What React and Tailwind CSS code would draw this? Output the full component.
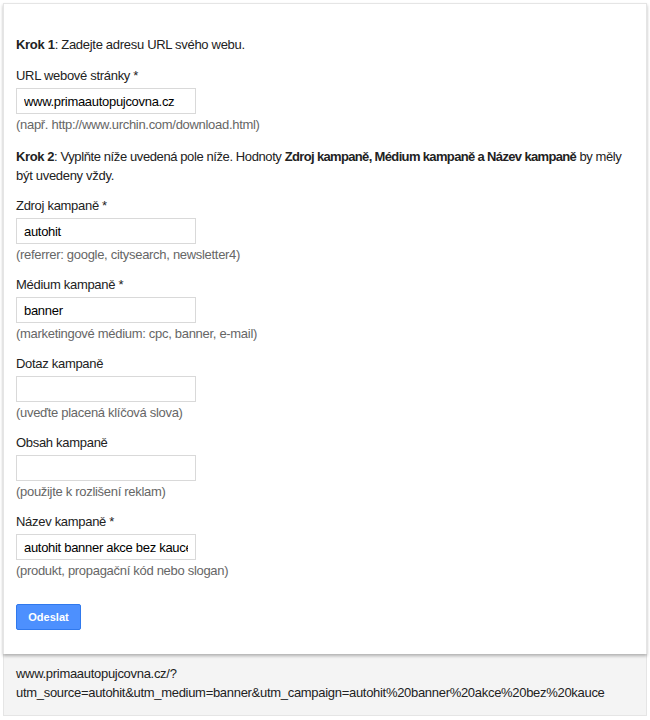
import React from 'react'

const fields = [
    { label: 'Zdroj kampaně *', value: 'autohit', hint: '(referrer: google, citysearch, newsletter4)' },
    { label: 'Médium kampaně *', value: 'banner', hint: '(marketingové médium: cpc, banner, e-mail)' },
    { label: 'Dotaz kampaně', value: '', hint: '(uveďte placená klíčová slova)' },
    { label: 'Obsah kampaně', value: '', hint: '(použijte k rozlišení reklam)' },
    { label: 'Název kampaně *', value: 'autohit banner akce bez kauce', hint: '(produkt, propagační kód nebo slogan)' },
]

function Field({ label, value, hint }) {
    return (
        <div className='mb-[11px]'>
            <div className='mb-[3px]'>{label}</div>
            <input
                type="text"
                defaultValue={value}
                className='block w-[180px] h-[26px] px-[7px] border border-[#d9d9d9] text-[13px] tracking-[-0.3px] text-black bg-white outline-none'
            />
            <div className='mt-[1px] text-[#666]'>{hint}</div>
        </div>
    )
}

export default function App() {
    return (
        <div className='bg-white min-h-screen pt-[3px] px-[3px] text-[13px] leading-[19px] tracking-[-0.3px] text-[#222]' style={{ fontFamily: '"Liberation Sans", Arial, sans-serif' }}>
            <div className='relative z-10 bg-white border border-b-0 border-[#e5e5e5] px-[12px] pt-[31px] pb-[24px] shadow-[0_2px_3px_rgba(0,0,0,0.28)]'>
                <p className='mb-[12px]'><b>Krok 1</b>: Zadejte adresu URL svého webu.</p>

                <div className='mb-[13px]'>
                    <div className='mb-[3px]'>URL webové stránky *</div>
                    <input
                        type="text"
                        defaultValue='www.primaautopujcovna.cz'
                        className='block w-[180px] h-[26px] px-[7px] border border-[#d9d9d9] text-[13px] tracking-[-0.3px] text-black bg-white outline-none'
                    />
                    <div className='mt-[1px] text-[#666]'>(např. http://www.urchin.com/download.html)</div>
                </div>

                <p className='mb-[11px]'>
                    <span className='whitespace-nowrap tracking-[-0.4px]'><b>Krok 2</b>: Vyplňte níže uvedená pole níže. Hodnoty <b className='tracking-[-0.65px]'>Zdroj kampaně, Médium kampaně a Název kampaně</b> by měly</span><br />být uvedeny vždy.
                </p>

                {fields.map((f) => (
                    <Field key={f.label} {...f} />
                ))}

                <button
                    type='button'
                    className='mt-[13px] w-[65px] h-[26px] bg-[#4d90fe] border border-[#3079ed] rounded-[2px] text-white text-[11px] font-bold tracking-normal'
                >Odeslat</button>
            </div>
            <div className='bg-[#f4f4f4] border border-t-0 border-[#e5e5e5] px-[12px] pt-[10px] pb-[13px]'>
                <div>www.primaautopujcovna.cz/?</div>
                <div>utm_source=autohit&amp;utm_medium=banner&amp;utm_campaign=autohit%20banner%20akce%20bez%20kauce</div>
            </div>
        </div>
    )
}
